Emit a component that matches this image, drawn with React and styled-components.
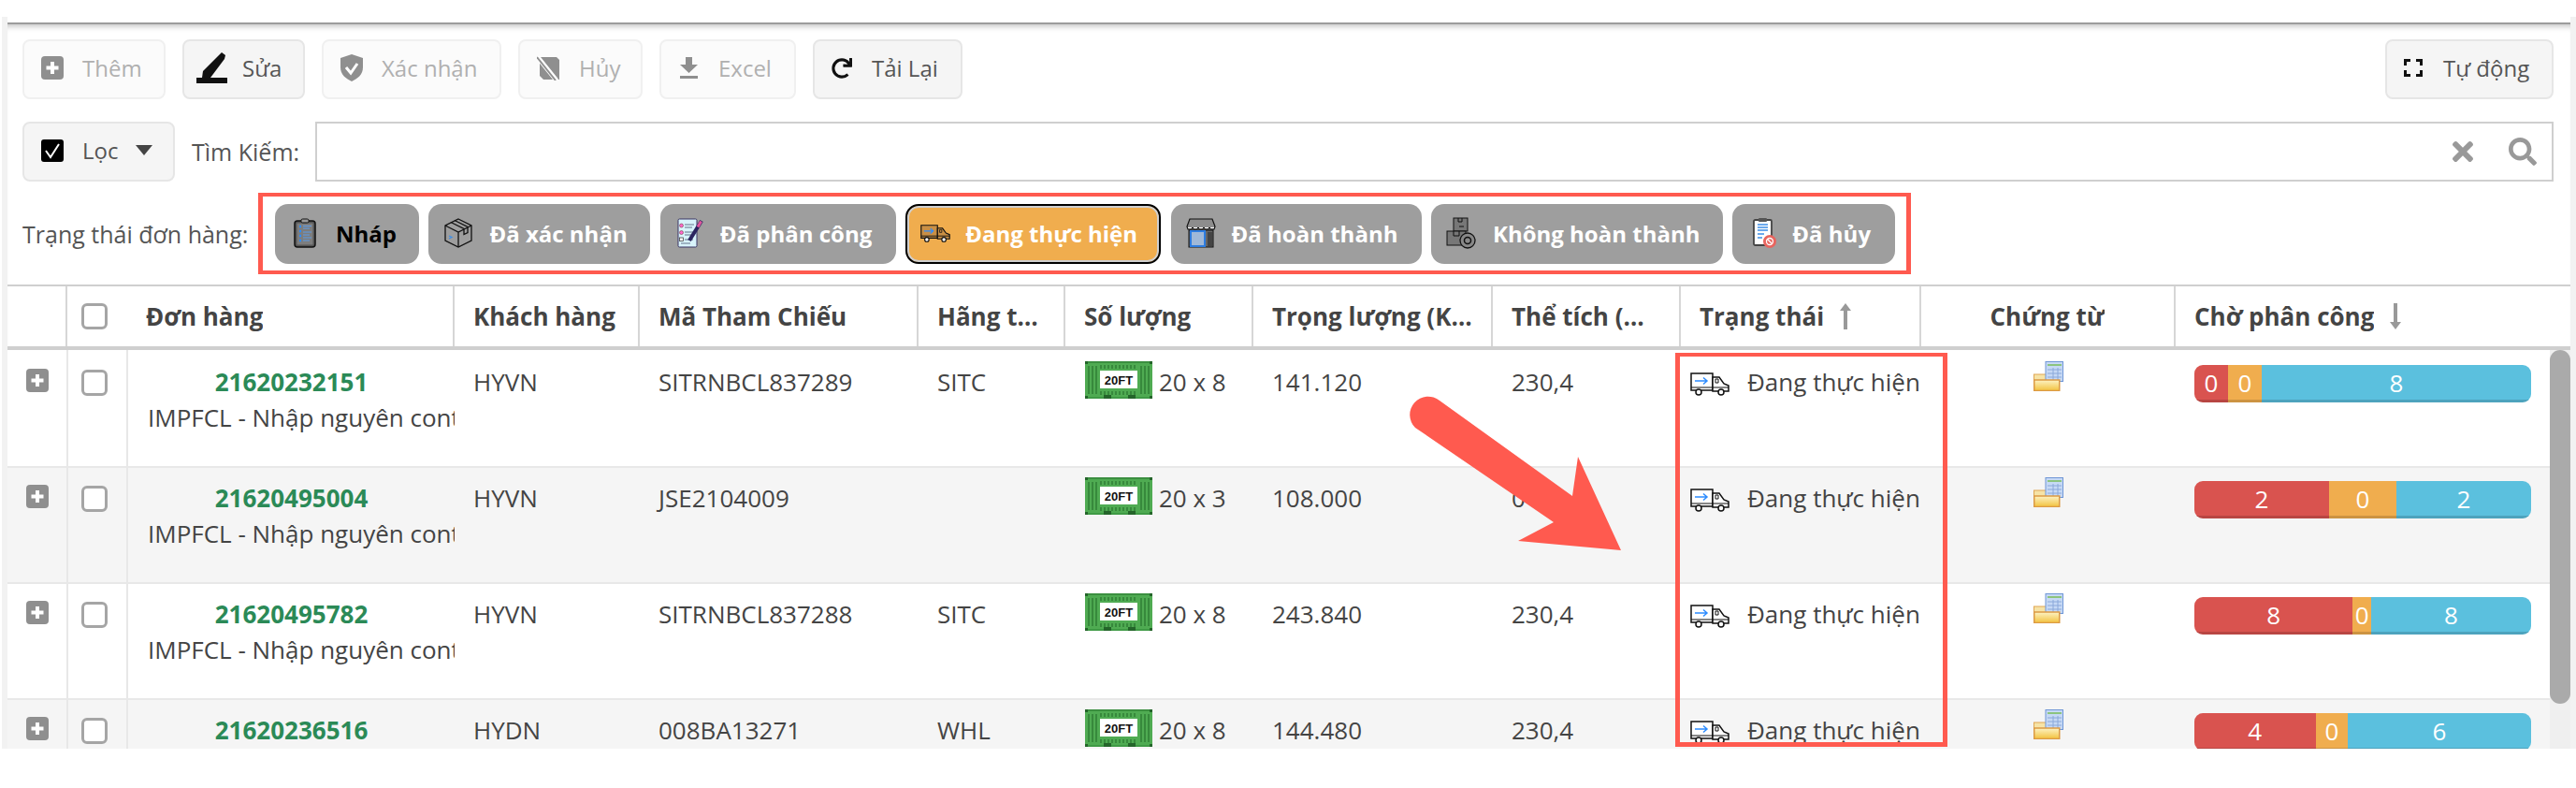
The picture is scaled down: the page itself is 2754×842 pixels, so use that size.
import React from "react";
import styled, { createGlobalStyle } from "styled-components";
import { FaSearch, FaTimes, FaRedo } from "react-icons/fa";

const GlobalStyle = createGlobalStyle`
  html, body {
    margin: 0;
    padding: 0;
    background: #fff;
    font-family: "Open Sans", "Noto Sans", sans-serif;
    color: #444;
  }
  * { box-sizing: border-box; }
`;

/* ---------- icons ---------- */

const PlusIcon = () => (
  <svg width="24" height="25" viewBox="0 0 24 25">
    <rect width="24" height="25" rx="4" fill="#8f8f8f" />
    <path d="M12 6v13M5.500 12.500h13" stroke="#fff" strokeWidth="4" />
  </svg>
);

const PencilIcon = () => (
  <svg width="33" height="33" viewBox="0 0 33 33">
    <path d="M27 0l4 3-1 4-15 20H6l1-7z" fill="#111" />
    <rect x="0" y="27" width="33" height="6" fill="#111" />
  </svg>
);

const ShieldIcon = () => (
  <svg width="24" height="29" viewBox="0 0 24 29">
    <path d="M12 0l12 4v10c0 8-6 12-12 15C6 26 0 22 0 14V4z" fill="#8f8f8f" />
    <path d="M6 14l5 6 7-10" fill="none" stroke="#fff" strokeWidth="3" />
  </svg>
);

const NoDocIcon = () => (
  <svg width="25" height="26" viewBox="0 0 25 26">
    <path d="M3 1h18l3 3v21H7L3 21z" fill="#8f8f8f" />
    <path d="M0 0l21 26" stroke="#fff" strokeWidth="5" />
    <path d="M0 1l20 25" stroke="#8f8f8f" strokeWidth="2" />
  </svg>
);

const DownloadIcon = () => (
  <svg width="19" height="23" viewBox="0 0 19 23">
    <path d="M6 0h7v8h6l-9.500 9L0 8h6z" fill="#8f8f8f" />
    <rect y="20" width="19" height="3" fill="#8f8f8f" />
  </svg>
);

const FullscreenIcon = () => (
  <svg width="20" height="19" viewBox="0 0 20 19">
    <path d="M1.500 7V1.500H7M13 1.500h5.500V7M18.500 12v5.500H13M7 17.500H1.500V12" fill="none" stroke="#111" strokeWidth="3" />
  </svg>
);

const CheckedBox = () => (
  <svg width="24" height="24" viewBox="0 0 24 24">
    <rect width="24" height="24" rx="3" fill="#000" />
    <path d="M5 12l5 7 9-14" fill="none" stroke="#fff" strokeWidth="2" />
  </svg>
);

const ClipboardIcon = () => (
  <svg width="24" height="32" viewBox="0 0 24 32">
    <rect x="1" y="3" width="22" height="28" rx="3" fill="#555" stroke="#111" strokeWidth="1.500" />
    <rect x="3.500" y="5.500" width="17" height="23" fill="#7d7d7d" />
    <rect x="8" y="1" width="8" height="4" rx="1.500" fill="#999" stroke="#111" />
    <path d="M6 9h2M6 14h2M6 19h2M6 24h2" stroke="#2d8cff" strokeWidth="2.500" />
    <path d="M10 8.500h9M10 11h7M10 15h9M10 18h7M10 21h9M10 24h7" stroke="#5d9ce8" strokeWidth="1.200" />
  </svg>
);

const BoxIcon = () => (
  <svg width="30" height="32" viewBox="0 0 30 32" fill="none" stroke="#111" strokeWidth="1.300">
    <path d="M15 1l14 7v16l-14 7-14-7V8z" />
    <path d="M1 8l14 7 14-7M15 15v16M7 4.500l14 7v6l4-2v-6L11 2.500" />
    <path d="M5 19l3 1.500-3 1.500" stroke="#3d8fe8" />
  </svg>
);

const ChecklistIcon = () => (
  <svg width="28" height="32" viewBox="0 0 28 32">
    <rect x="1" y="1" width="20" height="30" rx="1.500" fill="#d8f3fb" stroke="#3a3565" />
    <path d="M8 7h10M8 10h8M8 15h9M8 18h7M8 23h9M4 27h10" stroke="#64748b" strokeWidth="1.200" />
    <circle cx="4.500" cy="8" r="2" fill="#f6c" stroke="#744" strokeWidth=".6" />
    <circle cx="4.500" cy="15.500" r="2" fill="#f6c" stroke="#744" strokeWidth=".6" />
    <rect x="2.500" y="21" width="4" height="3.500" fill="#fff" stroke="#444" strokeWidth=".8" />
    <path d="M26 3L13 24" stroke="#2b2560" strokeWidth="4" />
    <path d="M25.500 3.500L22 9.500" stroke="#e0569c" strokeWidth="3" />
  </svg>
);

const TruckIcon = ({ $fill, $w = 42, $h = 25 }) => (
  <svg width={$w} height={$h} viewBox="0 0 42 25">
    <path d="M1 1h23v18H1z" fill={$fill} stroke="#111" strokeWidth="1.500" />
    <path d="M24 5h7l5 7 5 2v6H24z" fill={$fill} stroke="#111" strokeWidth="1.500" />
    <path d="M27 7h3v4h-3z" fill="none" stroke="#111" />
    <path d="M1 16h40" stroke="#111" strokeWidth="1.200" />
    <path d="M5 9h13M14 5.500L18 9l-4 3.500" fill="none" stroke="#2d8cff" strokeWidth="1.500" />
    <circle cx="9" cy="21" r="3" fill="#fff" stroke="#111" strokeWidth="1.500" />
    <circle cx="33" cy="21" r="3" fill="#fff" stroke="#111" strokeWidth="1.500" />
  </svg>
);

const ShopIcon = () => (
  <svg width="32" height="32" viewBox="0 0 32 32">
    <path d="M4 1h24l3 8-1 3H2L1 9z" fill="#8d8d8d" stroke="#111" strokeWidth="1.200" />
    <path d="M1 10q3 4 6 0 3 4 6 0 3 4 6 0 3 4 6 0 3 4 6 0" fill="#fff" stroke="#111" />
    <rect x="3" y="13" width="26" height="18" fill="#666" stroke="#111" />
    <rect x="5" y="14" width="15" height="16" fill="#9fb8d8" stroke="#2d7ce0" strokeWidth="2" />
    <rect x="23" y="15" width="5" height="15" fill="#444" />
  </svg>
);

const BoxesIcon = () => (
  <svg width="32" height="34" viewBox="0 0 32 34">
    <rect x="8" y="1" width="15" height="14" fill="#777" stroke="#111" />
    <rect x="1" y="15" width="20" height="15" fill="#777" stroke="#111" />
    <path d="M13 1v4h4V1M8 15v5h6v-5M14 10h5" fill="none" stroke="#111" />
    <circle cx="23" cy="25" r="8" fill="#888" stroke="#111" strokeWidth="1.300" />
    <circle cx="23" cy="25" r="3.500" fill="none" stroke="#111" strokeWidth="1.500" />
  </svg>
);

const CancelIcon = () => (
  <svg width="26" height="34" viewBox="0 0 26 34">
    <rect x="1" y="3" width="19" height="27" rx="1.500" fill="#fff" stroke="#444" strokeWidth="1.800" />
    <rect x="6" y="1" width="9" height="4" rx="1" fill="#555" />
    <path d="M5 8h11M5 11h11M5 14h11M5 18h7M5 22h5" stroke="#3d8fe8" strokeWidth="1.300" />
    <circle cx="18" cy="26" r="7" fill="#e8655f" />
    <circle cx="18" cy="26" r="3.500" fill="none" stroke="#fff" strokeWidth="1.300" />
    <path d="M15.500 23.500l5 5" stroke="#fff" strokeWidth="1.300" />
  </svg>
);

const ContainerIcon = () => (
  <svg width="72" height="40" viewBox="0 0 72 40">
    <rect width="72" height="40" fill="#4fab52" />
    <rect width="72" height="2" fill="#3b8f40" />
    <rect y="38" width="72" height="2" fill="#3f9a45" />
    <path d="M4 5v30M8 5v30M12 5v30M60 5v30M64 5v30M68 5v30" stroke="#37893c" strokeWidth="2" />
    <path d="M16 6h40M16 34h40" stroke="#37893c" strokeWidth="4" strokeDasharray="2 2" />
    <rect x="16" y="10" width="40" height="19" fill="#fff" />
    <text x="36" y="24.500" textAnchor="middle" fontFamily="Liberation Sans, sans-serif" fontWeight="700" fontSize="13" fill="#111">20FT</text>
    <rect x="20" y="36" width="8" height="4" fill="#24652a" />
    <rect x="46" y="36" width="8" height="4" fill="#24652a" />
    <rect width="3" height="3" fill="#24652a" />
    <rect x="69" width="3" height="3" fill="#24652a" />
    <rect y="37" width="3" height="3" fill="#24652a" />
    <rect x="69" y="37" width="3" height="3" fill="#24652a" />
  </svg>
);

const DocsIcon = () => (
  <svg width="32" height="32" viewBox="0 0 32 32">
    <defs>
      <linearGradient id="folderFront" x1="0" y1="0" x2="0" y2="1">
        <stop offset="0" stopColor="#fdf3c4" />
        <stop offset="1" stopColor="#f2c23e" />
      </linearGradient>
    </defs>
    <rect x="0.500" y="14" width="27" height="10" fill="#f6e3a6" stroke="#dfa653" />
    <rect x="13" y="0.500" width="18.500" height="21" fill="#c6d9f5" stroke="#6f96d6" />
    <path d="M15 4h15" stroke="#8cc47e" strokeWidth="2" />
    <path d="M15 9h15M15 13h15M15 17h15M21 7v14M26 7v14" stroke="#8aa8da" />
    <rect x="0.750" y="20" width="27" height="11.500" fill="url(#folderFront)" stroke="#dc9a44" strokeWidth="1.500" />
  </svg>
);

const SortArrow = ({ $down }) => (
  <svg width="12" height="28" viewBox="0 0 12 28">
    {$down ? (
      <path d="M4 0h4v20h4l-6 8-6-8h4z" fill="#999" />
    ) : (
      <path d="M6 0l6 8H8v20H4V8H0z" fill="#999" />
    )}
  </svg>
);

/* ---------- toolbar ---------- */

const Frame = styled.div`
  margin: 18px 0 0 2px;
  width: 2752px;
  height: 782px;
  padding-top: 6px;
  border-left: 6px solid #f2f2f2;
  border-right: 6px solid #f2f2f2;
  overflow: hidden;
`;

const Panel = styled.div`
  height: 776px;
  border-top: 2px solid #9c9c9c;
  box-shadow: inset 0 7px 6px -5px rgba(0, 0, 0, 0.25);
`;

const Tools = styled.div`
  display: flex;
  flex-direction: column;
  padding: 16px 18px 0 16px;
`;

const ButtonRow = styled.div`
  display: flex;
  align-items: center;
  gap: 18px;
  height: 64px;
`;

const Spacer = styled.div`
  flex: 1;
`;

const ToolButton = styled.div`
  display: flex;
  align-items: center;
  gap: ${(p) => p.$gap || 20}px;
  height: 64px;
  width: ${(p) => p.$w}px;
  padding-left: ${(p) => p.$pad || 18}px;
  padding-bottom: 3px;
  border: 2px solid ${(p) => (p.$off ? "#f0f0f0" : "#e6e6e6")};
  border-radius: 8px;
  background: ${(p) => (p.$off ? "#fbfbfb" : "#f5f5f5")};
  font-size: 24px;
  color: ${(p) => (p.$off ? "#b0b0b0" : "#555")};
  svg {
    flex-shrink: 0;
  }
`;

const Caret = styled.span`
  width: 0;
  height: 0;
  margin-left: -1px;
  border-left: 9px solid transparent;
  border-right: 9px solid transparent;
  border-top: 11px solid #444;
`;

const SearchRow = styled.div`
  display: flex;
  align-items: center;
  margin-top: 24px;
  height: 64px;
`;

const SearchLabel = styled.span`
  margin: 0 17px 0 18px;
  font-size: 25px;
  color: #555;
  white-space: nowrap;
`;

const SearchBox = styled.div`
  display: flex;
  align-items: center;
  justify-content: flex-end;
  gap: 33px;
  flex: 1;
  height: 64px;
  padding-right: 16px;
  border: 2px solid #cfcfcf;
  color: #999;
`;

const StatusRow = styled.div`
  display: flex;
  align-items: center;
  margin-top: 12px;
`;

const StatusLabel = styled.span`
  width: 252px;
  font-size: 25px;
  color: #555;
  white-space: nowrap;
`;

const StatusBox = styled.div`
  display: flex;
  gap: 10.400px;
  width: 1767px;
  height: 87px;
  padding: 8px 0 0 13px;
  border: 5px solid #ff5a4f;
  border-width: 4px 5px;
`;

const Pill = styled.div`
  display: flex;
  align-items: center;
  flex-shrink: 0;
  width: ${(p) => p.$w}px;
  height: 64px;
  gap: ${(p) => p.$gap}px;
  padding-left: ${(p) => p.$pad}px;
  padding-bottom: 2px;
  border-radius: 14px;
  background: ${(p) => (p.$active ? "#f0ad4e" : "#9e9e9e")};
  border: ${(p) => (p.$active ? "2px solid #000" : "none")};
  box-shadow: ${(p) => (p.$active ? "inset 0 0 0 2px #cfcfcf" : "none")};
  font-size: 24px;
  font-weight: 700;
  color: ${(p) => (p.$dark ? "#000" : "#fff")};
  white-space: nowrap;
  svg {
    flex-shrink: 0;
  }
`;

/* ---------- table ---------- */

const headCols = "64px 414px 198px 298px 157px 201px 256px 201px 257px 272px 422px";
const bodyCols = "65px 64px 349px 198px 298px 157px 201px 256px 201px 257px 272px 400px";

const TableHead = styled.div`
  display: grid;
  grid-template-columns: ${headCols};
  margin-top: 11px;
  height: 70px;
  border-top: 2px solid #cfcfcf;
  border-bottom: 4px solid #cfcfcf;
`;

const HeadCell = styled.div`
  display: flex;
  align-items: center;
  justify-content: ${(p) => (p.$center ? "center" : "flex-start")};
  gap: ${(p) => p.$gap || 0}px;
  min-width: 0;
  padding: 0 ${(p) => (p.$pad !== undefined ? p.$pad : 20)}px 0 20px;
  border-right: 2px solid #d6d6d6;
  font-size: 26px;
  font-weight: 700;
  color: #444;
  &:last-child {
    border-right: none;
  }
`;

const HeadText = styled.span`
  overflow: hidden;
  white-space: nowrap;
  text-overflow: ellipsis;
`;

const CheckSlot = styled.div`
  width: 28px;
  height: 28px;
  flex-shrink: 0;
  margin: ${(p) => p.$margin || 0};
  border: 3px solid #a5a5a5;
  border-radius: 6px;
  background: #fff;
`;

const BodyWrap = styled.div`
  display: flex;
  height: 426px;
  overflow: hidden;
`;

const Rows = styled.div`
  width: 2718px;
  overflow: hidden;
`;

const Row = styled.div`
  display: grid;
  grid-template-columns: ${bodyCols};
  height: 124px;
  background: ${(p) => (p.$alt ? "#f5f5f5" : "#fff")};
  box-shadow: ${(p) => (p.$first ? "none" : "inset 0 2px 0 #e8e8e8")};
  font-size: 26px;
  line-height: 38px;
  color: #444;
`;

const Cell = styled.div`
  display: flex;
  flex-direction: ${(p) => (p.$stack ? "column" : "row")};
  align-items: flex-start;
  gap: ${(p) => p.$gap || 0}px;
  min-width: 0;
  padding: ${(p) => p.$top ?? 15}px 0 0 ${(p) => p.$left ?? 20}px;
  overflow: hidden;
  white-space: nowrap;
`;

const SideCell = styled(Cell)`
  border-right: 2px solid #e8e8e8;
`;

const OrderNo = styled.a`
  align-self: center;
  margin-left: -21px;
  font-weight: 700;
  color: #2b8a57;
`;

const ExpandBox = styled.div`
  display: flex;
  width: 24px;
  height: 24px;
`;

const Quantity = styled.span`
  line-height: 44px;
`;

const TruckSlot = styled.span`
  display: flex;
  margin-top: 9px;
`;

const Bar = styled.div`
  display: flex;
  width: 360px;
  height: 40px;
  border-radius: 9px;
  overflow: hidden;
  color: #fff;
  line-height: 38px;
  text-align: center;
`;

const Seg = styled.div`
  background: ${(p) => p.$color};
  box-shadow: inset 0 -3px 0 rgba(0, 0, 0, 0.15);
`;

const Scrollbar = styled.div`
  width: 22px;
  height: 426px;
  background: #efefef;
`;

const Thumb = styled.div`
  height: 378px;
  border-radius: 11px;
  background: #aaa;
`;

/* ---------- annotations drawn over the table ---------- */

const Stage = styled.div`
  position: relative;
  width: 2754px;
  height: 842px;
  overflow: hidden;
`;

const MarkBox = styled.div`
  position: absolute;
  left: 1791px;
  top: 377px;
  width: 291px;
  height: 421px;
  border: 5px solid #ff5a4f;
  border-top-width: 4px;
`;

const MarkArrow = styled.svg`
  position: absolute;
  left: 1500px;
  top: 415px;
`;

const rows = [
  { no: "21620232151", cust: "HYVN", ref: "SITRNBCL837289", line: "SITC", qty: "20 x 8", weight: "141.120", vol: "230,4", bar: [[0, 10], [0, 10], [8, 80]] },
  { no: "21620495004", cust: "HYVN", ref: "JSE2104009", line: "", qty: "20 x 3", weight: "108.000", vol: "0", bar: [[2, 40], [0, 20], [2, 40]] },
  { no: "21620495782", cust: "HYVN", ref: "SITRNBCL837288", line: "SITC", qty: "20 x 8", weight: "243.840", vol: "230,4", bar: [[8, 47], [0, 5.500], [8, 47.500]] },
  { no: "21620236516", cust: "HYDN", ref: "008BA13271", line: "WHL", qty: "20 x 8", weight: "144.480", vol: "230,4", bar: [[4, 36], [0, 9.600], [6, 54.400]] },
];

const segColors = ["#d9534f", "#f0ad4e", "#5bc0de"];

const tools = [
  { label: "Thêm", icon: <PlusIcon />, w: 153, off: true },
  { label: "Sửa", icon: <PencilIcon />, w: 131, pad: 13, gap: 16 },
  { label: "Xác nhận", icon: <ShieldIcon />, w: 192, off: true },
  { label: "Hủy", icon: <NoDocIcon />, w: 133, off: true, gap: 20 },
  { label: "Excel", icon: <DownloadIcon />, w: 146, pad: 20, gap: 22, off: true },
  { label: "Tải Lại", icon: <FaRedo size={22} color="#111" />, w: 160, gap: 21 },
];

const pills = [
  { label: "Nháp", icon: <ClipboardIcon />, w: 154, pad: 20, gap: 21, dark: true },
  { label: "Đã xác nhận", icon: <BoxIcon />, w: 237, pad: 17, gap: 18 },
  { label: "Đã phân công", icon: <ChecklistIcon />, w: 252, pad: 18, gap: 18 },
  { label: "Đang thực hiện", icon: <TruckIcon $fill="#c98f45" $w={32} $h={19} />, w: 273, pad: 14, gap: 16, active: true },
  { label: "Đã hoàn thành", icon: <ShopIcon />, w: 268, pad: 16, gap: 17 },
  { label: "Không hoàn thành", icon: <BoxesIcon />, w: 312, pad: 16, gap: 18 },
  { label: "Đã hủy", icon: <CancelIcon />, w: 174, pad: 22, gap: 16 },
];

const App = () => {
  return (
    <Stage>
      <GlobalStyle />
      <Frame>
        <Panel>
          <Tools>
            <ButtonRow>
              {tools.map((t) => (
                <ToolButton key={t.label} $w={t.w} $off={t.off} $pad={t.pad} $gap={t.gap}>
                  {t.icon}
                  {t.label}
                </ToolButton>
              ))}
              <Spacer />
              <ToolButton $w={180} $gap={22}>
                <FullscreenIcon />
                Tự động
              </ToolButton>
            </ButtonRow>
            <SearchRow>
              <ToolButton $w={163} $gap={20}>
                <CheckedBox />
                Lọc
                <Caret />
              </ToolButton>
              <SearchLabel>Tìm Kiếm:</SearchLabel>
              <SearchBox>
                <FaTimes size={32} />
                <FaSearch size={30} />
              </SearchBox>
            </SearchRow>
            <StatusRow>
              <StatusLabel>Trạng thái đơn hàng:</StatusLabel>
              <StatusBox>
                {pills.map((p) => (
                  <Pill key={p.label} $w={p.w} $pad={p.pad} $gap={p.gap} $dark={p.dark} $active={p.active}>
                    {p.icon}
                    {p.label}
                  </Pill>
                ))}
              </StatusBox>
            </StatusRow>
          </Tools>

          <TableHead>
            <HeadCell />
            <HeadCell $gap={41}>
              <CheckSlot $margin="0 0 0 -5px" />
              <HeadText>Đơn hàng</HeadText>
            </HeadCell>
            <HeadCell>
              <HeadText>Khách hàng</HeadText>
            </HeadCell>
            <HeadCell>
              <HeadText>Mã Tham Chiếu</HeadText>
            </HeadCell>
            <HeadCell>
              <HeadText>Hãng tàu</HeadText>
            </HeadCell>
            <HeadCell>
              <HeadText>Số lượng</HeadText>
            </HeadCell>
            <HeadCell $pad={20}>
              <HeadText>Trọng lượng (Kg)</HeadText>
            </HeadCell>
            <HeadCell $pad={35}>
              <HeadText>Thể tích (m3)</HeadText>
            </HeadCell>
            <HeadCell $gap={17}>
              <HeadText>Trạng thái</HeadText>
              <SortArrow />
            </HeadCell>
            <HeadCell $center>
              <HeadText>Chứng từ</HeadText>
            </HeadCell>
            <HeadCell $gap={17}>
              <HeadText>Chờ phân công</HeadText>
              <SortArrow $down />
            </HeadCell>
          </TableHead>

          <BodyWrap>
            <Rows>
              {rows.map((r, i) => (
                <Row key={r.no} $alt={i % 2 === 1} $first={i === 0}>
                  <SideCell $top={20}>
                    <ExpandBox>
                      <PlusIcon />
                    </ExpandBox>
                  </SideCell>
                  <SideCell $top={21} $left={14}>
                    <CheckSlot />
                  </SideCell>
                  <Cell $stack $left={21}>
                    <OrderNo>{r.no}</OrderNo>
                    <span>IMPFCL - Nhập nguyên container</span>
                  </Cell>
                  <Cell>{r.cust}</Cell>
                  <Cell>{r.ref}</Cell>
                  <Cell>{r.line}</Cell>
                  <Cell $top={12} $left={21} $gap={7}>
                    <ContainerIcon />
                    <Quantity>{r.qty}</Quantity>
                  </Cell>
                  <Cell>{r.weight}</Cell>
                  <Cell>{r.vol}</Cell>
                  <Cell $left={10} $gap={19}>
                    <TruckSlot>
                      <TruckIcon $fill="#fff" />
                    </TruckSlot>
                    <span>Đang thực hiện</span>
                  </Cell>
                  <Cell $top={12} $left={120}>
                    <DocsIcon />
                  </Cell>
                  <Cell $top={16}>
                    <Bar>
                      {r.bar.map(([value, pct], k) => (
                        <Seg key={k} $color={segColors[k]} style={{ width: `${pct}%` }}>
                          {value}
                        </Seg>
                      ))}
                    </Bar>
                  </Cell>
                </Row>
              ))}
            </Rows>
            <Scrollbar>
              <Thumb />
            </Scrollbar>
          </BodyWrap>
        </Panel>
      </Frame>

      <MarkBox />
      <MarkArrow width="250" height="185" viewBox="0 0 250 185">
        <path d="M39 13L181 115 187 73 233 173 123 163 161 143 13 42A19.500 19.500 0 0 1 39 13Z" fill="#ff5a4f" />
      </MarkArrow>
    </Stage>
  );
};

export default App;
